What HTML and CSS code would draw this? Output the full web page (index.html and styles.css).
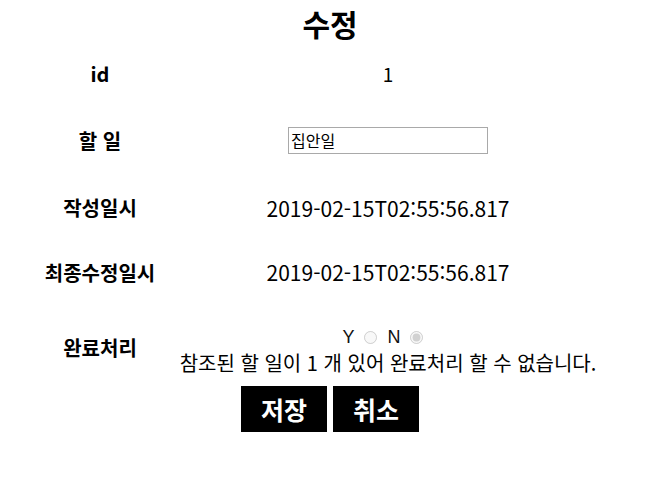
FILE: index.html
```html
<!DOCTYPE html>
<html lang="ko">
<head>
<meta charset="utf-8">
<link rel="stylesheet" href="styles.css">
</head>
<body>
<h1 class="title">수정</h1>
<div class="form">
  <div class="label">id</div>
  <div class="value">1</div>
  <div class="label">할 일</div>
  <div class="value"><input class="text-input" type="text" value="집안일"></div>
  <div class="label">작성일시</div>
  <div class="value date">2019-02-15T02:55:56.817</div>
  <div class="label">최종수정일시</div>
  <div class="value date">2019-02-15T02:55:56.817</div>
  <div class="label label-done">완료처리</div>
  <div class="value done">
    <div class="radios">
      <span class="yn">Y</span><input class="radio" type="radio" name="done" disabled>
      <span class="yn">N</span><input class="radio" type="radio" name="done" checked disabled>
    </div>
    <div class="msg">참조된 할 일이 1 개 있어 완료처리 할 수 없습니다.</div>
  </div>
</div>
<div class="buttons">
  <button class="btn">저장</button>
  <button class="btn">취소</button>
</div>
</body>
</html>
```
FILE: styles.css
```css
html, body {
  margin: 0;
  padding: 0;
  background: #fff;
  color: #000;
  font-family: "Liberation Sans", "Noto Sans CJK KR", sans-serif;
}
.title {
  margin: 0;
  height: 40px;
  line-height: 46px;
  text-align: center;
  font-size: 30px;
  font-weight: bold;
  font-family: "Noto Sans CJK KR", sans-serif;
  padding-right: 6px;
}
.form {
  margin-left: 45px;
  display: grid;
  grid-template-columns: 110px 466px;
  grid-template-rows: 66px 68px 67px 62px 80px;
}
.label {
  display: flex;
  align-items: center;
  justify-content: center;
  white-space: nowrap;
  font-weight: bold;
  font-size: 20px;
  font-family: "Noto Sans CJK KR", sans-serif;
}
.label-done {
  padding-top: 8px;
}
.value {
  display: flex;
  align-items: center;
  justify-content: center;
  white-space: nowrap;
  font-size: 19px;
  font-family: "Noto Sans CJK KR", sans-serif;
}
.date {
  font-size: 21px;
}
.text-input {
  width: 200px;
  height: 27px;
  box-sizing: border-box;
  border: 1px solid #a9a9a9;
  padding: 0 2px;
  font-size: 16px;
  font-family: "Noto Sans CJK KR", sans-serif;
  color: #000;
}
.done {
  flex-direction: column;
  padding-top: 16px;
}
.radios {
  display: flex;
  align-items: center;
  height: 18px;
  margin-bottom: 6px;
  font-size: 18px;
  font-family: "Liberation Sans", sans-serif;
  color: #111;
}
.yn {
  display: block;
  line-height: 18px;
}
.radio {
  width: 13px;
  height: 13px;
  margin: 0 11px 0 9px;
}
.msg {
  font-size: 20px;
  line-height: 22px;
}
.buttons {
  display: flex;
  justify-content: center;
  gap: 6px;
  margin-top: 3px;
  padding-right: 6px;
}
.btn {
  width: 86px;
  height: 46px;
  border: none;
  background: #000;
  color: #fff;
  font-size: 25px;
  font-weight: bold;
  font-family: "Noto Sans CJK KR", sans-serif;
  padding: 0;
}
```
